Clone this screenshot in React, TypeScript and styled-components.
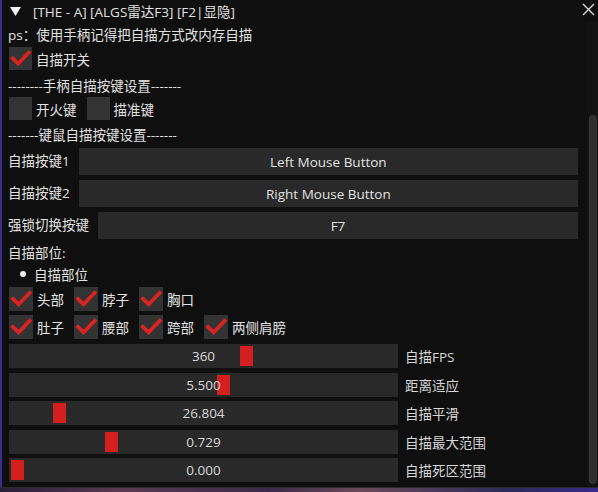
import React from 'react';
import styled, { createGlobalStyle } from 'styled-components';

const GlobalStyle = createGlobalStyle`
  html, body {
    margin: 0;
    padding: 0;
    background: #0f0f0f;
  }
  * {
    box-sizing: border-box;
  }
`

type SliderItem = { value: string, label: string, pos: number }

const sliders: SliderItem[] = [
  { value: '360', label: '自描FPS', pos: 231 },
  { value: '5.500', label: '距离适应', pos: 208 },
  { value: '26.804', label: '自描平滑', pos: 44 },
  { value: '0.729', label: '自描最大范围', pos: 96 },
  { value: '0.000', label: '自描死区范围', pos: 2 },
]

export default function App() {
  return (
    <Desktop>
      <GlobalStyle />
      <Window>
        <TitleBar>
          <Arrow width="11" height="9" viewBox="0 0 11 9">
            <path d="M0 0 L11 0 L5.5 9 Z" fill="#f0f0f0" />
          </Arrow>
          <TitleText>[THE - A] [ALGS雷达F3] [F2|显隐]</TitleText>
          <Close width="13" height="13" viewBox="0 0 13 13">
            <path d="M1 1 L12 12 M12 1 L1 12" stroke="#d8d8d8" strokeWidth="1.4" />
          </Close>
        </TitleBar>

        <Body>
          <Main>
            <Line $top={4}>ps：使用手柄记得把自描方式改内存自描</Line>

            <CheckRow $top={3}>
              <CheckItem label="自描开关" checked size={23} />
            </CheckRow>

            <Line $top={7}>--------手柄自描按键设置-------</Line>

            <CheckRow $top={2}>
              <CheckItem label="开火键" size={23} />
              <CheckItem label="描准键" size={23} />
            </CheckRow>

            <Line $top={6}>-------键鼠自描按键设置-------</Line>

            <KeyRow $top={4}>
              <KeyLabel>自描按键1</KeyLabel>
              <KeyButton>Left Mouse Button</KeyButton>
            </KeyRow>
            <KeyRow $top={5}>
              <KeyLabel>自描按键2</KeyLabel>
              <KeyButton>Right Mouse Button</KeyButton>
            </KeyRow>
            <KeyRow $top={5}>
              <KeyLabel>强锁切换按键</KeyLabel>
              <KeyButton>F7</KeyButton>
            </KeyRow>

            <Line $top={5}>自描部位:</Line>
            <BulletRow>
              <Dot />
              <span>自描部位</span>
            </BulletRow>

            <CheckRow $top={4}>
              <CheckItem label="头部" checked size={24} />
              <CheckItem label="脖子" checked size={24} />
              <CheckItem label="胸口" checked size={24} />
            </CheckRow>
            <CheckRow $top={4}>
              <CheckItem label="肚子" checked size={24} />
              <CheckItem label="腰部" checked size={24} />
              <CheckItem label="跨部" checked size={24} />
              <CheckItem label="两侧肩膀" checked size={24} />
            </CheckRow>

            <SliderList>
              {sliders.map(s => (
                <SliderRow key={s.label}>
                  <SliderFrame>
                    <Grab style={{ left: s.pos }} />
                    <SliderValue>{s.value}</SliderValue>
                  </SliderFrame>
                  <SliderLabel>{s.label}</SliderLabel>
                </SliderRow>
              ))}
            </SliderList>
          </Main>

          <ScrollTrack>
            <ScrollThumb />
          </ScrollTrack>
        </Body>
      </Window>
    </Desktop>
  );
}

type CheckItemProps = { label: string, checked?: boolean, size: number }
function CheckItem(props: CheckItemProps) {
  return (
    <CheckWrap>
      <Box $size={props.size}>
        {props.checked ? (
          <svg width={props.size} height={props.size} viewBox="0 0 23 23">
            <path d="M3.8 11.4 L9.2 16.6 L19.8 5.6" fill="none" stroke="#d92424" strokeWidth="3.6" strokeLinecap="square" strokeLinejoin="miter" />
          </svg>
        ) : (null)}
      </Box>
      <span>{props.label}</span>
    </CheckWrap>
  )
}

const Desktop = styled.div`
  width: 598px;
  height: 492px;
  background: linear-gradient(90deg, #2a1f3a 0%, #5a3a52 20%, #3b2a4a 45%, #6a4a5a 60%, #2c2a5a 85%, #3a2a8a 100%);
  overflow: hidden;
`

const Window = styled.div`
  width: 598px;
  height: 488px;
  display: flex;
  flex-direction: column;
  background: #0f0f0f;
  border-left: 2px solid #3a2c8c;
  border-bottom: 1px solid #2a2a2a;
  color: #e2e2e2;
  font-family: "Open Sans", "Noto Sans CJK SC", sans-serif;
  font-size: 13.5px;
`

const TitleBar = styled.div`
  height: 22px;
  display: flex;
  align-items: center;
  padding-left: 8px;
  padding-right: 3px;
  background: #0f0f0f;
  flex-shrink: 0;
`

const Arrow = styled.svg`
  margin-top: 1px;
  flex-shrink: 0;
`

const TitleText = styled.span`
  margin-left: 12px;
  flex: 1;
  white-space: nowrap;
`

const Close = styled.svg`
  margin-top: -4px;
  flex-shrink: 0;
`

const Body = styled.div`
  flex: 1;
  display: flex;
  flex-direction: row;
  min-height: 0;
`

const Main = styled.div`
  flex: 1;
  display: flex;
  flex-direction: column;
  padding-left: 6px;
  padding-right: 9px;
`

const Line = styled.div<{ $top: number }>`
  height: 18px;
  line-height: 18px;
  margin-top: ${p => p.$top}px;
  white-space: nowrap;
`

const CheckRow = styled.div<{ $top: number }>`
  display: flex;
  flex-direction: row;
  align-items: center;
  gap: 10px;
  margin-top: ${p => p.$top}px;
  padding-left: 1px;
`

const CheckWrap = styled.div`
  display: flex;
  flex-direction: row;
  align-items: center;
  gap: 4px;
  white-space: nowrap;
`

const Box = styled.div<{ $size: number }>`
  width: ${p => p.$size}px;
  height: ${p => p.$size}px;
  background: #333333;
  display: flex;
`

const KeyRow = styled.div<{ $top: number }>`
  display: flex;
  flex-direction: row;
  align-items: center;
  gap: 9px;
  margin-top: ${p => p.$top}px;
`

const KeyLabel = styled.span`
  white-space: nowrap;
  margin-top: -4px;
`

const KeyButton = styled.div`
  flex: 1;
  height: 27px;
  background: #292929;
  display: flex;
  align-items: center;
  justify-content: center;
`

const BulletRow = styled.div`
  height: 18px;
  margin-top: 3px;
  display: flex;
  align-items: center;
  padding-left: 12px;
  gap: 8px;
`

const Dot = styled.span`
  width: 6px;
  height: 6px;
  border-radius: 50%;
  background: #ececec;
`

const SliderList = styled.div`
  display: flex;
  flex-direction: column;
  gap: 4.5px;
  margin-top: 5px;
  padding-left: 1px;
`

const SliderRow = styled.div`
  display: flex;
  flex-direction: row;
  align-items: center;
  gap: 7px;
`

const SliderFrame = styled.div`
  position: relative;
  width: 389px;
  height: 24px;
  background: #292929;
  display: flex;
  align-items: center;
  justify-content: center;
`

const Grab = styled.div`
  position: absolute;
  top: 2px;
  width: 13px;
  height: 20px;
  background: #d41f1f;
`

const SliderValue = styled.span`
  position: relative;
  color: #d8d8d8;
`

const SliderLabel = styled.span`
  white-space: nowrap;
  color: #d8d8d8;
`

const ScrollTrack = styled.div`
  width: 11px;
  background: #121212;
  padding: 93px 1px 3px 2px;
  display: flex;
`

const ScrollThumb = styled.div`
  flex: 1;
  border-radius: 4px;
  background: #2f2f2f;
  border-left: 1px solid #3a3a3a;
`
